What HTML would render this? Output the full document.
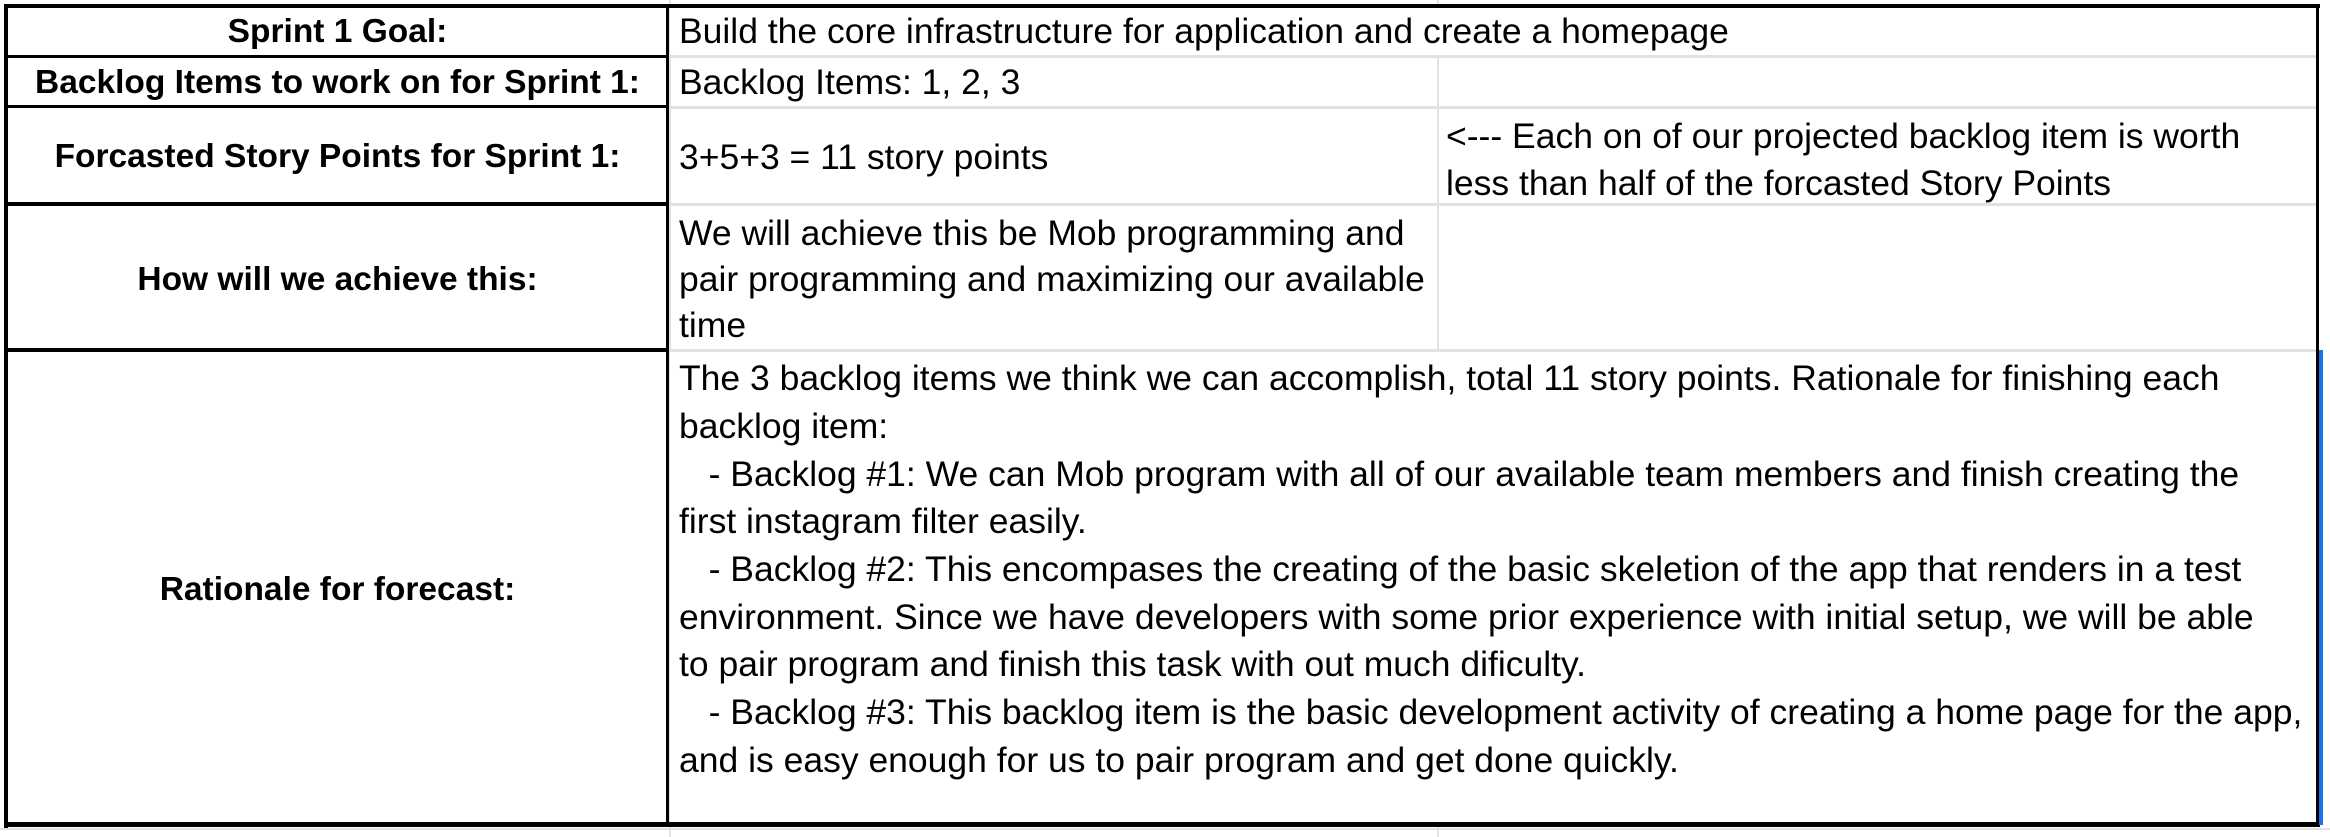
<!DOCTYPE html>
<html><head><meta charset="utf-8"><style>
body{margin:0;width:2330px;height:837px;background:#fff;position:relative;overflow:hidden;font-family:"Liberation Sans",Carlito,sans-serif;color:#000}
.l{position:absolute;white-space:nowrap;font-size:35.5px;line-height:47px;height:47px}
.b{font-weight:bold;font-size:33.5px;text-align:center;left:6px;width:663px}
.h{position:absolute;height:3px;background:#e2e2e2}
.v{position:absolute;width:3px;background:#e2e2e2}
.k{position:absolute;background:#000}
</style></head><body>
<div class="v" style="left:669px;top:0;height:837px;width:2px"></div>
<div class="v" style="left:1437px;top:0;height:837px;width:2px"></div>
<div class="h" style="left:669px;top:55px;width:1650px"></div>
<div class="h" style="left:669px;top:106px;width:1650px"></div>
<div class="h" style="left:669px;top:203px;width:1650px"></div>
<div class="h" style="left:669px;top:349px;width:1650px"></div>
<div class="h" style="left:0;top:828px;width:2330px;height:2px"></div>
<div style="position:absolute;left:670px;top:352px;width:1646px;height:472px;background:#fff"></div>
<div style="position:absolute;left:670px;top:8px;width:1646px;height:47px;background:#fff"></div>
<div class="k" style="left:4px;top:4px;width:2316px;height:4px"></div>
<div class="k" style="left:4px;top:4px;width:4px;height:824px"></div>
<div class="k" style="left:4px;top:822px;width:2316px;height:5px"></div>
<div class="k" style="left:666px;top:4px;width:3px;height:823px"></div>
<div class="k" style="left:2316px;top:4px;width:3px;height:823px"></div>
<div class="k" style="left:4px;top:55px;width:665px;height:3px"></div>
<div class="k" style="left:4px;top:105px;width:665px;height:3px"></div>
<div class="k" style="left:4px;top:202px;width:665px;height:4px"></div>
<div class="k" style="left:4px;top:348px;width:665px;height:4px"></div>
<div style="position:absolute;left:2319px;top:350px;width:4px;height:475px;background:#1a73e8"></div>
<div class="l b" style="top:8px">Sprint 1 Goal:</div>
<div class="l b" style="top:59px">Backlog Items to work on for Sprint 1:</div>
<div class="l b" style="top:133px">Forcasted Story Points for Sprint 1:</div>
<div class="l b" style="top:256px">How will we achieve this:</div>
<div class="l b" style="top:566px">Rationale for forecast:</div>
<div class="l" style="left:679px;top:8px">Build the core infrastructure for application and create a homepage</div>
<div class="l" style="left:679px;top:59px">Backlog Items: 1, 2, 3</div>
<div class="l" style="left:679px;top:134px">3+5+3 = 11 story points</div>
<div class="l" style="left:1446px;top:113px">&lt;--- Each on of our projected backlog item is worth</div>
<div class="l" style="left:1446px;top:160px">less than half of the forcasted Story Points</div>
<div class="l" style="left:679px;top:210px">We will achieve this be Mob programming and</div>
<div class="l" style="left:679px;top:256px">pair programming and maximizing our available</div>
<div class="l" style="left:679px;top:302px">time</div>
<div class="l" style="left:679px;top:355px">The 3 backlog items we think we can accomplish, total 11 story points. Rationale for finishing each</div>
<div class="l" style="left:679px;top:403px">backlog item:</div>
<div class="l" style="left:679px;top:451px">&nbsp;&nbsp;&nbsp;- Backlog #1: We can Mob program with all of our available team members and finish creating the</div>
<div class="l" style="left:679px;top:498px">first instagram filter easily.</div>
<div class="l" style="left:679px;top:546px">&nbsp;&nbsp;&nbsp;- Backlog #2: This encompases the creating of the basic skeletion of the app that renders in a test</div>
<div class="l" style="left:679px;top:594px">environment. Since we have developers with some prior experience with initial setup, we will be able</div>
<div class="l" style="left:679px;top:641px">to pair program and finish this task with out much dificulty.</div>
<div class="l" style="left:679px;top:689px">&nbsp;&nbsp;&nbsp;- Backlog #3: This backlog item is the basic development activity of creating a home page for the app,</div>
<div class="l" style="left:679px;top:737px">and is easy enough for us to pair program and get done quickly.</div>
</body></html>
